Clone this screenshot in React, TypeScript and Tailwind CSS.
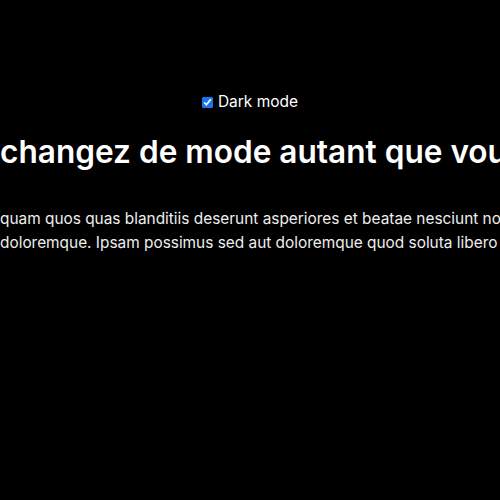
export default function App() {
  return (
    <div
      className="w-[500px] h-[500px] overflow-hidden bg-black text-white"
      style={{ fontFamily: "Inter, 'Open Sans', sans-serif" }}
    >
      <div className="flex flex-col pt-[92px]">
        {/* toggle */}
        <label className="flex items-center justify-center gap-[5px] text-[15.5px] leading-5">
          <input type="checkbox" defaultChecked className="w-[11px] h-[11px] accent-[#1a73e8]" />
          <span>Dark mode</span>
        </label>

        <h1 className="mt-[20px] whitespace-nowrap text-[31.6px] font-semibold leading-10">
          changez de mode autant que vous voulez
        </h1>

        <div className="mt-[35px] whitespace-nowrap text-[15.4px] leading-6 text-[#eeeeee]">
          <p>quam quos quas blanditiis deserunt asperiores et beatae nesciunt nostrum</p>
          <p>doloremque. Ipsam possimus sed aut doloremque quod soluta libero</p>
        </div>
      </div>
    </div>
  );
}
